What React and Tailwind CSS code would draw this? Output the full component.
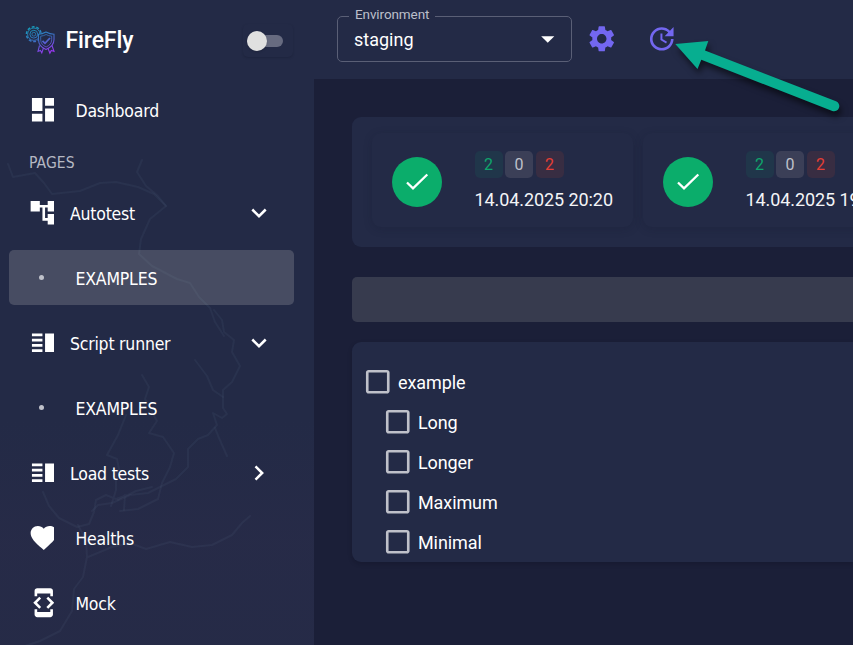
import React from "react";
import {
  MdDashboard,
  MdAccountTree,
  MdVerticalSplit,
  MdFavorite,
  MdDeveloperMode,
  MdSettings,
  MdUpdate,
  MdArrowDropDown,
  MdCheckBoxOutlineBlank,
} from "react-icons/md";

const sideFont = "font-['DejaVu_Sans_Condensed','DejaVu_Sans',sans-serif]";

function Logo() {
  return (
    <svg width="32" height="30" viewBox="0 0 32 30" fill="none" stroke="url(#logoGrad)" className="shrink-0">
      <defs>
        <linearGradient id="logoGrad" gradientUnits="userSpaceOnUse" x1="10" y1="0" x2="20" y2="29">
          <stop offset="0" stopColor="#13a0bd" />
          <stop offset="0.5" stopColor="#3c6fc4" />
          <stop offset="1" stopColor="#9a35f0" />
        </linearGradient>
      </defs>
      <circle cx="8.8" cy="9.2" r="7.4" strokeWidth="1.4" strokeDasharray="2.9 1.75" />
      <circle cx="8.8" cy="9.2" r="6.2" strokeWidth="0.9" />
      <circle cx="8.8" cy="9.2" r="3.9" strokeWidth="0.9" />
      <circle cx="8.8" cy="9.2" r="1.9" strokeWidth="0.8" />
      <path d="M13.5 9.3c3-.2 5-1 7.5-2.3 2.500 1.300 4.800 2.100 8 2.300v5.200c0 4.800-3.200 8-8 10-4.800-2-7.500-5.200-7.500-10z" strokeWidth="1.1" fill="#232a46" />
      <path d="M15.7 11.2c2-.2 3.800-.8 5.400-1.700 1.600.9 3.400 1.500 5.600 1.700v3.600c0 3.400-2.200 5.600-5.600 7.200-3.400-1.600-5.400-3.800-5.400-7.200z" strokeWidth="0.8" />
      <path d="M17.5 15.8l2.500 2.500 5-5.300" strokeWidth="1.8" />
      <path d="M14.5 20.5l-1.500 5.800 2.500-.8 1.300 2.400 1.700-5M27 20.500l2 5.800-2.700-.8-1.400 2.600-2-5" strokeWidth="1.1" />
    </svg>
  );
}

function Terrain() {
  return (
    <svg width="314" height="645" viewBox="0 0 314 645" fill="none" strokeWidth="2" strokeLinecap="round" strokeLinejoin="round" className="absolute inset-0">
      <defs>
        <filter id="soft"><feGaussianBlur stdDeviation="0.7" /></filter>
        <linearGradient id="haze" x1="0" y1="0" x2="0" y2="1">
          <stop offset="0.65" stopColor="#282b48" stopOpacity="0" />
          <stop offset="0.84" stopColor="#282b48" stopOpacity="0.7" />
          <stop offset="1" stopColor="#282b48" stopOpacity="0.5" />
        </linearGradient>
      </defs>
      <rect width="314" height="645" fill="url(#haze)" />
      <g stroke="#5f7593" strokeOpacity="0.1" filter="url(#soft)">
        <path d="M8 164l5 13 22-4 9 10 8 11 28-3 20-8 16-1 22 5 16 7 12 12-16 13-9 20-2 15 13 12 25 13 13 4 9 14 11 11 5 14 9 14" />
        <path d="M142 160l-5 12 9 14 12 10 8 10" />
        <path d="M214 310l8 10 2 12 10 8-2 12 8 14-8 16-9 8v18l4 6-5 4-9-5 4 12-9 10-10 4-10 10v18l-12 12-16 8-12 6-18 2-18 8-14 2-6 6" />
        <path d="M195 360l12 16 6 14 10 7M215 428l4 10 8 18" />
        <path d="M142 375l7 12-4 12 12 22-8 12 14 4 11 16-4 14-8 16-4 16-20 10-18 2" />
        <path d="M126 415l-8 20-11 20 10 4 2 10-5 9M43 492l6 14 10 12 18 9 12-3 5-12 2-12 10-5 10 4 12-4 8-4 16-4M116 472v18l-5 16M118 500l7-5-1 15" />
        <path d="M78 525l8 15 1 17-4 20-9 12-2 22-12 20-20 10-18 6M88 557l24-10 18-4 16 6 24-7 22 5 20-2 20-10 10-12 8-7" />
      </g>
    </svg>
  );
}

function Chevron({ right }) {
  return (
    <svg width="18" height="18" viewBox="0 0 18 18" fill="none" stroke="white" strokeWidth="2.5" className={right ? "-rotate-90" : ""}>
      <path d="M2.3 5.5L9 12.2 15.7 5.5" />
    </svg>
  );
}

function NavIcon({ icon: Icon }) {
  return (
    <span className="ml-[19px] flex w-[26px] shrink-0 overflow-hidden">
      <Icon size={31.5} className="shrink-0" />
    </span>
  );
}

function NavItem({ icon, label, arrow }) {
  return (
    <div className="flex h-[55px] items-center">
      <NavIcon icon={icon} />
      <span className={`${arrow ? "ml-4" : "ml-[21.5px]"} mt-[3px] flex-1 whitespace-nowrap text-[17.5px] tracking-[-0.22px]`}>{label}</span>
      {arrow && (
        <span className="mr-[26px] mt-px">
          <Chevron right={arrow === "right"} />
        </span>
      )}
    </div>
  );
}

function SubItem({ active }) {
  return (
    <div className={`flex h-[55px] items-center rounded-[5px] ${active ? "bg-[#c8c8c8]/22" : ""}`}>
      <span className="ml-[30px] size-[5px] rounded-full bg-[#bfc1ca]" />
      <span className="ml-[31.5px] mt-[3px] text-[17.5px] tracking-[-0.2px]">EXAMPLES</span>
    </div>
  );
}

function RunCard({ date }) {
  return (
    <div className="flex h-[94px] w-[261px] shrink-0 items-center rounded-[9px] pl-5 shadow-[0_2px_9px_rgba(20,23,45,0.22)]">
      <span className="mt-1 flex size-[50px] shrink-0 items-center justify-center rounded-full bg-[#0bad6b]">
        <svg width="24" height="20" viewBox="0 0 24 20" fill="none" stroke="white" strokeWidth="2.3">
          <path d="M2 10.5L8 16.3 22.3 2.500" />
        </svg>
      </span>
      <div className="ml-[32.5px] mt-[3px]">
        <div className="flex gap-[2.5px] text-[16px] leading-[27px]">
          <span className="w-7 rounded-[5px] bg-[#20364a] text-center text-[#0fa56c]">2</span>
          <span className="w-7 rounded-[5px] bg-[#3b3f57] text-center text-[#bfc1ca]">0</span>
          <span className="w-7 rounded-[5px] bg-[#382d42] text-center text-[#e63f35]">2</span>
        </div>
        <div className="mt-[8px] whitespace-nowrap text-[18px] leading-[27px] tracking-[-0.08px] text-[#f3f4f7]">{date}</div>
      </div>
    </div>
  );
}

function CheckRow({ label, child }) {
  return (
    <div className={`flex h-10 items-center ${child ? "pl-[30.25px]" : "pl-[10.25px]"}`}>
      <MdCheckBoxOutlineBlank size={31.5} className="shrink-0 text-[#bfc1ca]" />
      <span className="ml-[4.25px] text-[18px] tracking-[-0.1px]">{label}</span>
    </div>
  );
}

function Arrow() {
  return (
    <svg width="190" height="100" viewBox="665 30 190 100" className="absolute left-[665px] top-[30px] drop-shadow-[2px_5px_3px_rgba(0,0,0,0.55)]">
      <path d="M675.3 44L708.3 41 705 50.5 836 101.3A5 5 0 0 1 832.3 110.9L701.3 59.8 697.5 69z" fill="#07ae90" />
    </svg>
  );
}

export default function App() {
  return (
    <div className="relative flex h-[645px] w-[853px] overflow-hidden bg-[#1b1f38] font-[Roboto,sans-serif] text-white">
      <aside className="relative h-full w-[314px] shrink-0 overflow-hidden bg-[#232a46]">
        <Terrain />
        <div className="relative pl-[9px] pr-5">
          <div className="flex h-[82px] items-start pl-4 pt-[25px]">
            <Logo />
            <span className="ml-[8.5px] mt-[2px] text-[23px] font-medium leading-[28px] tracking-[-0.1px]">FireFly</span>
            <span className="ml-auto mr-px mt-[-1px] flex h-[33px] w-[50px] items-center rounded-[5px] pl-1 shadow-[0_1px_2px_rgba(15,18,40,0.25)]">
              <span className="flex h-3 w-9 items-center rounded-full bg-[#676b80]">
                <span className="size-5 rounded-full bg-[#e0e0e0] shadow-sm" />
              </span>
            </span>
          </div>
          <nav className={sideFont}>
            <NavItem icon={MdDashboard} label="Dashboard" />
            <div className="flex h-12 items-center pl-5 pt-[6px] text-[15.5px] tracking-[0.1px] text-[#b5b8c3]">PAGES</div>
            <div className="flex flex-col gap-[10px]">
              <NavItem icon={MdAccountTree} label="Autotest" arrow="down" />
              <SubItem active />
              <NavItem icon={MdVerticalSplit} label="Script runner" arrow="down" />
              <SubItem />
              <NavItem icon={MdVerticalSplit} label="Load tests" arrow="right" />
              <NavItem icon={MdFavorite} label="Healths" />
              <NavItem icon={MdDeveloperMode} label="Mock" />
            </div>
          </nav>
        </div>
      </aside>
      <main className="min-w-0 flex-1">
        <header className="flex h-[79px] items-center bg-[#232a46] pb-px pl-[23px]">
          <div className="relative flex h-[46px] w-[235px] items-center rounded-[5px] border border-[#5a5f76] pl-4">
            <span className="absolute left-[11px] top-[-13px] bg-[#232a46] px-[6px] text-[13.5px] leading-[20px] tracking-[-0.1px] text-[#bcbfca]">Environment</span>
            <span className="text-[18px]">staging</span>
            <MdArrowDropDown size={31.5} className="ml-auto mr-[8px]" />
          </div>
          <MdSettings size={31.5} className="ml-[13.5px] text-[#7367f0]" />
          <MdUpdate size={31.5} className="ml-[28.5px] text-[#7367f0]" />
        </header>
        <div className="pl-[38px] pt-[38px]">
          <section className="flex h-[130px] gap-[10px] overflow-hidden rounded-l-[9px] bg-[#232a46] pl-5 pt-4">
            <RunCard date="14.04.2025 20:20" />
            <RunCard date="14.04.2025 19:40" />
          </section>
          <div className="mt-[30px] h-[45px] rounded-l-[5px] bg-[#373b4e]" />
          <section className="mt-5 h-[220px] rounded-l-[9px] bg-[#232a46] pt-5 shadow-[0_2px_4px_rgba(10,12,28,0.25)]">
            <CheckRow label="example" />
            <CheckRow label="Long" child />
            <CheckRow label="Longer" child />
            <CheckRow label="Maximum" child />
            <CheckRow label="Minimal" child />
          </section>
        </div>
      </main>
      <Arrow />
    </div>
  );
}
